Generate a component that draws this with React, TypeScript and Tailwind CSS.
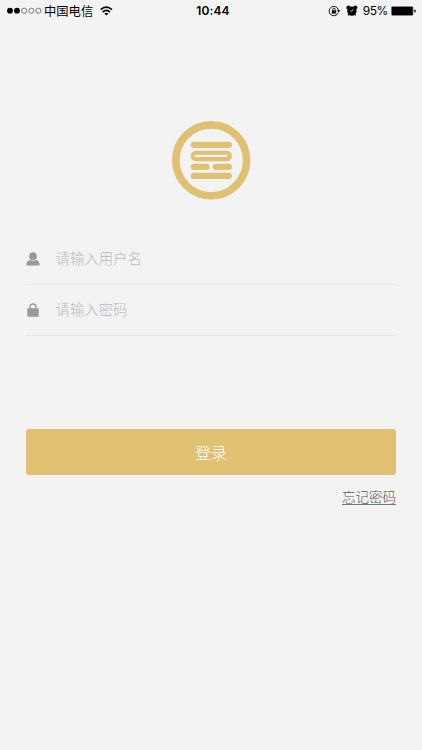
import React from "react";

function StatusBar() {
  return (
    <header className="relative flex h-[22px] items-center justify-between pl-[7px] pr-[5px] text-black">
      <div className="flex items-center">
        <svg className="h-[8px] w-[36px]" viewBox="0 0 36 8">
          <circle cx="3" cy="3.7" r="2.9" />
          <circle cx="10" cy="3.7" r="2.9" />
          <g fill="none" stroke="#333" strokeWidth="0.6">
            <circle cx="17.1" cy="3.7" r="2.6" />
            <circle cx="24.2" cy="3.7" r="2.6" />
            <circle cx="31.3" cy="3.7" r="2.6" />
          </g>
        </svg>
        <span className="ml-[1px] text-[12.3px] leading-[22px]">中国电信</span>
        <svg className="ml-[7px] h-[10px] w-[13px]" viewBox="0 0 13 10">
          <g fill="none" stroke="#000" strokeWidth="1.7">
            <path d="M0.7 3.6 Q6.3 -1.3 12 3.6" />
            <path d="M2.8 6 Q6.3 2.9 9.9 6" />
          </g>
          <path d="M4.3 7.5 Q6.3 5.9 8.4 7.5 L6.35 9.6 Z" />
        </svg>
      </div>
      <span className="absolute inset-x-0 pl-[4px] text-center font-['Inter'] text-[12px] font-semibold leading-[22px] tracking-[0.1px]">
        10:44
      </span>
      <div className="flex items-center">
        <svg className="h-[12px] w-[13px]" viewBox="0 0 13 12">
          <path d="M10.2 7.8 A4.7 4.7 0 1 1 10.4 5" fill="none" stroke="#000" strokeWidth="0.9" />
          <path d="M8.9 5.3 H12.4 L10.7 7.6 Z" />
          <path d="M3.8 5.3 H8.2 V8.6 H3.8 Z" />
          <path d="M4.7 5.5 V4.5 A1.3 1.3 0 0 1 7.3 4.5 V5.5" fill="none" stroke="#000" strokeWidth="0.8" />
        </svg>
        <svg className="ml-[5px] h-[12px] w-[12px]" viewBox="0 0 12 12">
          <circle cx="5.9" cy="6.1" r="4.7" />
          <path d="M1.1 4.2 A1.9 1.9 0 0 1 3.9 1.2 L4.3 3 Z M7.9 1.2 A1.9 1.9 0 0 1 10.7 4.2 L7.5 3 Z" />
          <path d="M2.9 9.2 L2.3 10.4 M8.9 9.2 L9.5 10.4" stroke="#000" strokeWidth="1.2" />
          <path d="M4.3 5.4 L5.9 6.4 L7.5 4.2" fill="none" stroke="#f3f3f3" strokeWidth="0.7" />
        </svg>
        <span className="ml-[5px] font-['Inter'] text-[12px] leading-[22px] tracking-[-0.4px]">95%</span>
        <svg className="ml-[3px] h-[10px] w-[26px]" viewBox="0 0 26 10">
          <rect x="0.3" y="0.4" width="22" height="9.2" rx="1.2" fill="#777" />
          <rect x="0.7" y="0.8" width="21" height="8.4" rx="0.8" />
          <path d="M23.3 3.2 Q24.8 3.8 24.8 5 Q24.8 6.2 23.3 6.8 Z" />
        </svg>
      </div>
    </header>
  );
}

function Logo() {
  return (
    <svg className="h-[80px] w-[80px]" viewBox="171 120 80 80" fill="#e0c073">
      <circle cx="211.2" cy="160.3" r="35.4" fill="none" stroke="#e0c073" strokeWidth="7.6" />
      <rect x="190.7" y="141.8" width="41.2" height="6.3" rx="3.1" />
      <path
        fillRule="evenodd"
        d="M196 150.7 H226.6 A5.3 5.3 0 0 1 226.6 161.3 H196 A5.3 5.3 0 0 1 196 150.7 Z M195.8 154.8 Q195 154.8 195 155.9 Q195 157.1 195.8 157.1 H226.8 Q227.5 157.1 227.5 155.9 Q227.5 154.8 226.8 154.8 Z"
      />
      <rect x="190.7" y="163.8" width="18.9" height="6.3" rx="3.1" />
      <rect x="212.7" y="163.8" width="19.2" height="6.3" rx="3.1" />
      <rect x="190.7" y="172.7" width="41.2" height="6.3" rx="3.1" />
    </svg>
  );
}

function UserIcon() {
  return (
    <svg className="h-[14px] w-[14px]" viewBox="0 0 14 14" fill="#999">
      <ellipse cx="7" cy="4.2" rx="3.8" ry="3.9" />
      <path d="M3.6 8 Q7 9.6 10.4 8 C12.5 8.8 13.6 10.6 13.6 13.6 H0.3 C0.3 10.6 1.5 8.8 3.6 8 Z" />
    </svg>
  );
}

function LockIcon() {
  return (
    <svg className="h-[14px] w-[14px]" viewBox="0 0 14 14" fill="#999">
      <rect x="1.3" y="5.2" width="11.4" height="8.6" rx="0.6" />
      <path d="M4 5.5 V4.1 A3 3.1 0 0 1 10 4.1 V5.5" fill="none" stroke="#999" strokeWidth="1.4" />
    </svg>
  );
}

interface FieldProps {
  icon: React.ReactNode;
  placeholder: string;
  type: string;
}

function Field({ icon, placeholder, type }: FieldProps) {
  return (
    <label className="flex h-[51px] items-center border-b border-[#e6e6e6]">
      {icon}
      <input
        type={type}
        placeholder={placeholder}
        className="ml-[15.5px] h-[30px] flex-1 bg-transparent pb-[4px] text-[14.4px] font-light text-[#666] outline-none placeholder:text-[#b8b8be]"
      />
    </label>
  );
}

export default function App() {
  return (
    <main className="h-[750px] w-full overflow-hidden bg-[#f3f3f3] font-['Noto_Sans_CJK_SC',sans-serif]">
      <StatusBar />
      <div className="flex justify-center pt-[98px]">
        <Logo />
      </div>
      <form className="mx-[26px] mt-[34px] flex flex-col">
        <Field icon={<UserIcon />} placeholder="请输入用户名" type="text" />
        <Field icon={<LockIcon />} placeholder="请输入密码" type="password" />
        <button
          type="button"
          className="mt-[93px] h-[46px] rounded-[3px] bg-[#e0c073] pb-[1px] text-[16px] font-light text-white"
        >
          登录
        </button>
        <a className="mt-[13px] self-end border-b border-[#777] text-[13.5px] font-light leading-[16px] text-[#555]">
          忘记密码
        </a>
      </form>
    </main>
  );
}
